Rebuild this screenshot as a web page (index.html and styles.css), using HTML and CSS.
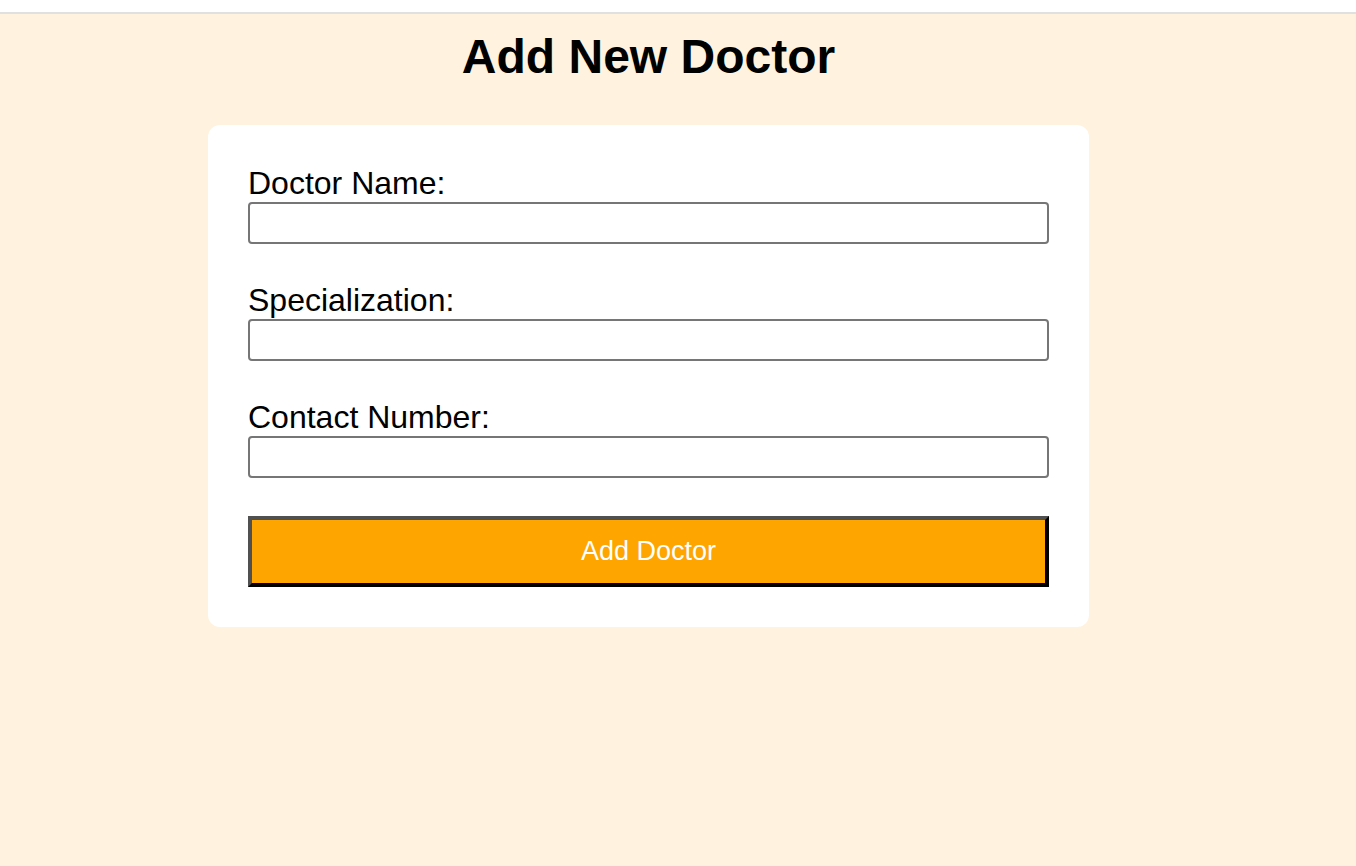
FILE: index.html
```html
<!DOCTYPE html>
<html lang="en">
<head>
<meta charset="utf-8">
<title>Add New Doctor</title>
<link rel="stylesheet" href="styles.css">
</head>
<body>
<div class="topbar"></div>
<main class="page">
  <div class="wrap">
    <h1 class="title">Add New Doctor</h1>
    <form class="card">
      <div class="field">
        <label class="label" for="name">Doctor Name:</label>
        <input class="input" id="name" type="text">
      </div>
      <div class="field">
        <label class="label" for="spec">Specialization:</label>
        <input class="input" id="spec" type="text">
      </div>
      <div class="field">
        <label class="label" for="contact">Contact Number:</label>
        <input class="input" id="contact" type="text">
      </div>
      <button class="btn" type="button">Add Doctor</button>
    </form>
  </div>
</main>
</body>
</html>
```
FILE: styles.css
```css
html, body {
  margin: 0;
  padding: 0;
}
body {
  background: #fff2df;
  font-family: "Liberation Sans", Arial, sans-serif;
  color: #000;
  min-height: 866px;
}
.topbar {
  height: 12px;
  background: #ffffff;
  border-bottom: 2px solid #dfe0df;
}
.page {
  padding-top: 15px;
}
.wrap {
  width: 881px;
  margin-left: 208px;
}
.title {
  margin: 0 0 41px 0;
  font-size: 48px;
  font-weight: bold;
  text-align: center;
  line-height: normal;
}
.card {
  background: #ffffff;
  border-radius: 12px;
  padding: 40px;
  display: flex;
  flex-direction: column;
}
.field {
  display: flex;
  flex-direction: column;
  margin-bottom: 38px;
}
.label {
  font-size: 32px;
  line-height: normal;
}
.input {
  box-sizing: border-box;
  width: 801px;
  height: 42px;
  margin: 0;
  padding: 10px;
  font-size: 16px;
  font-family: "Liberation Sans", Arial, sans-serif;
  border: 2px solid #767676;
  border-radius: 4px;
  background: #fff;
}
.btn {
  box-sizing: border-box;
  width: 801px;
  height: 71px;
  margin: 0;
  padding: 0;
  background: #ffa500;
  color: #ffffff;
  font-family: "Liberation Sans", Arial, sans-serif;
  font-size: 27px;
  border-width: 4px;
  border-style: solid;
  border-color: #505050 #000000 #000000 #505050;
  border-radius: 0;
}
```
